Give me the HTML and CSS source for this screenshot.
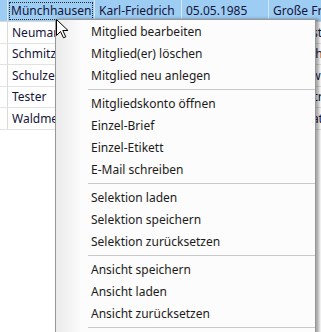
FILE: index.html
```html
<!DOCTYPE html>
<html lang="de">
<head>
    <meta charset="UTF-8">
    <meta name="viewport" content="width=device-width, initial-scale=1.0">
    <title>Mitglieder</title>
    <link rel="stylesheet" href="styles.css">
</head>
<body>
    <div class="grid">
        <div class="row selected">
            <div class="cell head"></div>
            <div class="cell"><span class="focus">Münchhausen</span></div>
            <div class="cell">Karl-Friedrich</div>
            <div class="cell">05.05.1985</div>
            <div class="cell">Große Freiheit 12</div>
        </div>
        <div class="row">
            <div class="cell head"></div>
            <div class="cell">Neumann</div>
            <div class="cell">Peter</div>
            <div class="cell">12.03.1970</div>
            <div class="cell">Gartenstr. 4</div>
        </div>
        <div class="row short">
            <div class="cell head"></div>
            <div class="cell">Schmitz</div>
            <div class="cell">Anna</div>
            <div class="cell">21.09.1964</div>
            <div class="cell">Am Bach 17</div>
        </div>
        <div class="row">
            <div class="cell head"></div>
            <div class="cell">Schulze</div>
            <div class="cell">Klaus</div>
            <div class="cell">01.11.1958</div>
            <div class="cell">Lindenweg 3</div>
        </div>
        <div class="row short">
            <div class="cell head"></div>
            <div class="cell">Tester</div>
            <div class="cell">Max</div>
            <div class="cell">30.06.1990</div>
            <div class="cell">Hauptstr. 8</div>
        </div>
        <div class="row">
            <div class="cell head"></div>
            <div class="cell">Waldmeier</div>
            <div class="cell">Heinz</div>
            <div class="cell">14.02.1949</div>
            <div class="cell">Kirchplatz 1</div>
        </div>
    </div>

    <ul class="context-menu">
        <li class="item">Mitglied bearbeiten</li>
        <li class="item">Mitglied(er) löschen</li>
        <li class="item">Mitglied neu anlegen</li>
        <li class="separator"></li>
        <li class="item">Mitgliedskonto öffnen</li>
        <li class="item">Einzel-Brief</li>
        <li class="item">Einzel-Etikett</li>
        <li class="item">E-Mail schreiben</li>
        <li class="separator"></li>
        <li class="item">Selektion laden</li>
        <li class="item">Selektion speichern</li>
        <li class="item">Selektion zurücksetzen</li>
        <li class="separator"></li>
        <li class="item">Ansicht speichern</li>
        <li class="item">Ansicht laden</li>
        <li class="item">Ansicht zurücksetzen</li>
        <li class="separator"></li>
        <li class="item">Spalten anpassen</li>
    </ul>

    <svg class="cursor" width="13" height="20" viewBox="0 0 13 20">
        <path d="M0.5 0.5 L0.5 16.5 L4.5 12.5 L7.5 18.8 L9.8 17.8 L6.8 11.5 L12 11.5 Z" fill="#fff" stroke="#000" stroke-width="1" stroke-linejoin="miter"/>
    </svg>
</body>
</html>
```

FILE: styles.css
```css
body {
    margin: 0;
    padding: 0;
    width: 321px;
    height: 332px;
    overflow: hidden;
    background-color: #ffffff;
    font-family: "Noto Sans", "Open Sans", sans-serif;
    font-size: 12px;
    position: relative;
}

.grid {
    width: 420px;
}

.row {
    display: flex;
    height: 21px;
    border-bottom: 1px solid #e2e2e2;
    color: #14143a;
}

.row.short {
    height: 20px;
}

.row.selected {
    background-color: #9dcdf3;
    border-bottom-color: #d8d8d8;
}

.cell {
    width: 82px;
    padding-left: 4px;
    border-right: 1px solid #dadada;
    display: flex;
    align-items: center;
    white-space: nowrap;
    overflow: hidden;
    line-height: 16px;
}

.cell.head {
    width: 7px;
    padding-left: 0;
}

.row.selected .cell {
    border-right-color: #d4e6f6;
}

.focus {
    display: block;
    margin-left: -3px;
    padding: 1px 2px 1px 2px;
    width: 80px;
    outline: 1px dotted #2a2a2a;
    outline-offset: -1px;
}

.context-menu {
    position: absolute;
    left: 55px;
    top: 19px;
    width: 259px;
    height: 340px;
    margin: 0;
    padding: 1px 0 0 0;
    list-style: none;
    border: 1px solid #979797;
    background: linear-gradient(to right, #ebebeb 0, #fbfbfb 25px, #fcfcfc 26px);
    box-shadow: 3px 0 3px rgba(0, 0, 0, 0.35);
    color: #1b1b1b;
}

.context-menu .item {
    height: 22px;
    line-height: 22px;
    padding-left: 35px;
    white-space: nowrap;
}

.context-menu .separator {
    height: 6px;
    position: relative;
}

.context-menu .separator::after {
    content: "";
    position: absolute;
    left: 32px;
    right: 0;
    top: 2px;
    border-top: 1px solid #c9c9c9;
}

.cursor {
    position: absolute;
    left: 56px;
    top: 19px;
}
```
